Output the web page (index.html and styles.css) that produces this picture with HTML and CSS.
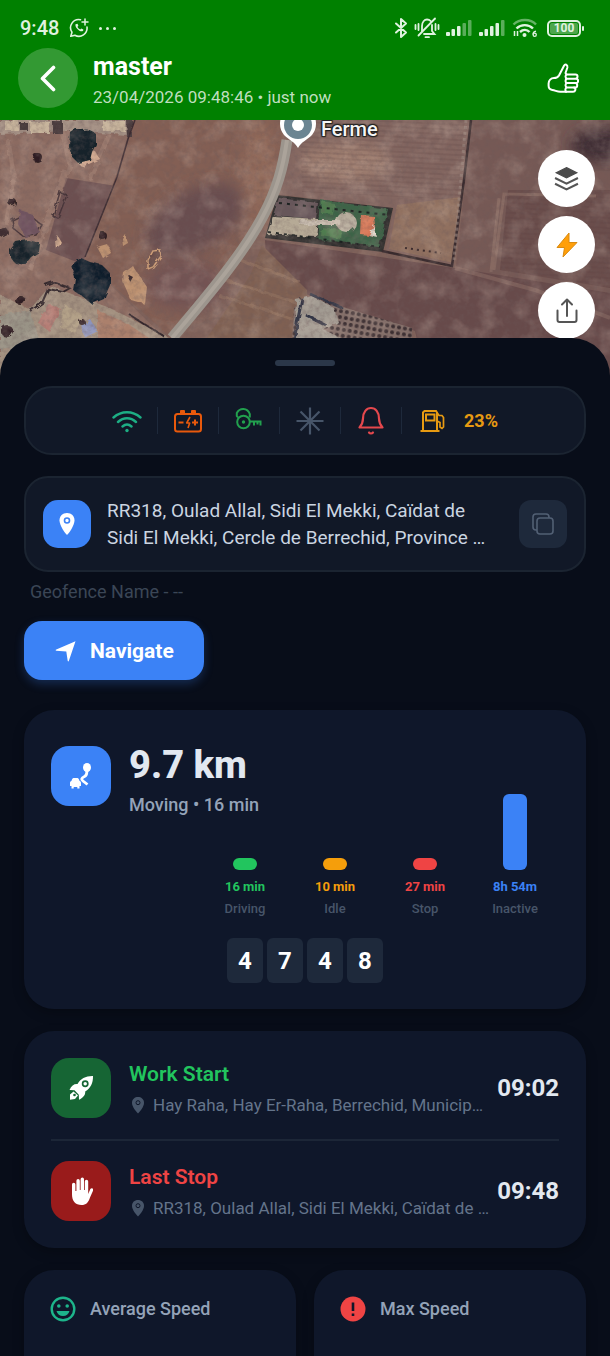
FILE: index.html
```html
<!DOCTYPE html>
<html lang="en">
<head>
<meta charset="utf-8">
<meta name="viewport" content="width=device-width, initial-scale=1">
<title>master</title>
<link rel="stylesheet" href="styles.css">
</head>
<body>
<div class="app">
  <header class="topbar">
    <div class="statusbar">
      <span class="clock">9:48</span>
      <svg class="sb-whatsapp" width="20" height="20" viewBox="0 0 20 20" fill="none" stroke="currentColor" stroke-width="1.6" stroke-linecap="round" stroke-linejoin="round">
        <path d="M11.500 1.700A8.200 8.200 0 0 0 3 14.300L1.800 18.300l4.100-1.100A8.200 8.200 0 0 0 18 9"/>
        <path d="M16 1v6M13 4h6" stroke-width="1.500"/>
        <path d="M6.500 6.200c-.8 2.800 3.400 7.400 6.700 7.100 1-.3 1.300-1 1.100-1.800l-2-1-1 1c-1.200-.4-2.400-1.600-2.800-2.800l.9-1-.9-2z" fill="currentColor" stroke="none"/>
      </svg>
      <span class="dots"><i></i><i></i><i></i></span>
      <div class="sb-right">
        <svg width="14" height="22" viewBox="0 0 14 22" fill="none" stroke="currentColor" stroke-width="2" stroke-linejoin="round" stroke-linecap="round"><path d="M2 6.500 12 15.500 7 20V2l5 4.500L2 15.500"/></svg>
        <svg width="26" height="22" viewBox="0 0 26 22" fill="none" stroke="currentColor" stroke-width="1.800" stroke-linecap="round">
          <path d="M8 14V9c0-4 2.500-6.500 5-6.500 1.500 0 2.700.5 3.600 1.500M18 8v6l2.500 3H10"/><path d="M21 1.500 4.500 18.500"/><path d="M11.500 20.200h3.500M1.500 8v4M4.500 7v6M21.500 7v6M24.500 8v4"/>
        </svg>
        <svg width="27" height="18" viewBox="0 0 27 18" fill="currentColor"><rect x="0" y="13" width="4" height="4" rx="1"/><rect x="5.500" y="10" width="3.500" height="7" rx="1"/><rect x="11" y="7" width="3.500" height="10" rx="1"/><g opacity=".4"><rect x="16.500" y="4" width="3.500" height="13" rx="1"/><rect x="22" y="1" width="3.500" height="16" rx="1"/></g></svg>
        <svg width="27" height="18" viewBox="0 0 27 18" fill="currentColor"><rect x="0" y="13" width="4" height="4" rx="1"/><rect x="5.500" y="10" width="3.500" height="7" rx="1"/><rect x="11" y="7" width="3.500" height="10" rx="1"/><rect x="16.500" y="4" width="3.500" height="13" rx="1"/><rect x="22" y="1" width="3.500" height="16" rx="1" opacity=".4"/></svg>
        <svg width="26" height="20" viewBox="0 0 26 20" fill="none" stroke="currentColor" stroke-width="2.400">
          <path d="M1.500 6.500c6-6 17-6 22.500 0" opacity=".45"/><path d="M4.500 10.500c4.500-4.500 12-4.500 16.500 0"/><path d="M8 14c3-2.800 7-2.800 9.500 0" /><circle cx="12.500" cy="17" r="2" fill="currentColor" stroke="none"/>
          <path d="M2.500 13v5M5.500 13v5" stroke-width="1.500"/><path d="M24 13.200c-2.500.5-3 2-3 3.300" stroke-width="1.300"/><circle cx="22.700" cy="16.700" r="1.600" stroke-width="1.300"/>
        </svg>
        <span class="battery"><b>100</b></span>
      </div>
    </div>
    <div class="titlebar">
      <button class="back" type="button" aria-label="Back">
        <svg width="16" height="27" viewBox="0 0 16 27" fill="none" stroke="currentColor" stroke-width="3.600" stroke-linecap="round" stroke-linejoin="round"><path d="M13.500 2.500 2.500 13.500l11 11"/></svg>
      </button>
      <div class="titles">
        <h1>master</h1>
        <p>23/04/2026 09:48:46 • just now</p>
      </div>
      <button class="like" type="button" aria-label="Like">
        <svg width="32" height="32" viewBox="0 0 32 32" fill="none" stroke="currentColor" stroke-width="2" stroke-linejoin="round" stroke-linecap="round">
          <path d="M19.500 12.500 18.500 11l1.900-5.500c.4-3-2.300-3.800-3.400-1.700L12 13.500c-1 1.800-2.600 2.600-5 2.600-3.200 0-5.400 2.200-5.400 5.400v2.300c0 2.400 1.300 3.800 3.700 4.200 3.400.6 4.700 1.800 8 1.800H26c2.600 0 3.300-3.400 1-4.300"/>
          <path d="M20 12.500h8.500c2.700 0 2.700 4.200 0 4.200H20M20 16.700h9c2.800 0 2.800 4.400 0 4.400h-9M20 21.100h8.200c2.700 0 2.700 4.400 0 4.400H20M20 12.500c-2 .5-2 3.700 0 4.200-2 .5-2 3.900 0 4.400-2 .5-2 3.900 0 4.400-1.800.4-2 2.600-1 4.300"/>
        </svg>
      </button>
    </div>
  </header>

  <section class="map" aria-label="Map">
    <svg class="terrain" viewBox="0 0 610 256" preserveAspectRatio="xMidYMin slice">
      <defs>
        <filter id="grain" x="0" y="0" width="100%" height="100%"><feTurbulence type="fractalNoise" baseFrequency=".2" numOctaves="3" seed="7"/><feColorMatrix values="0 0 0 0 .15  0 0 0 0 .1  0 0 0 0 .1  1.500 0 0 0 -.6"/></filter>
        <filter id="light" x="0" y="0" width="100%" height="100%"><feTurbulence type="fractalNoise" baseFrequency=".05" numOctaves="4" seed="3"/><feColorMatrix values="0 0 0 0 .8  0 0 0 0 .66  0 0 0 0 .56  0 1.500 0 0 -.65"/></filter>
        <filter id="rough" x="-20%" y="-20%" width="140%" height="140%"><feTurbulence type="fractalNoise" baseFrequency=".15" numOctaves="2" seed="5"/><feDisplacementMap in="SourceGraphic" scale="5"/><feGaussianBlur stdDeviation=".6"/></filter>
        <filter id="soft" x="-20%" y="-20%" width="140%" height="140%"><feGaussianBlur stdDeviation="7"/></filter>
        <pattern id="furrow" width="5" height="5" patternUnits="userSpaceOnUse" patternTransform="rotate(3)"><path d="M0 1h5" stroke="#4f3838" stroke-width="1" opacity=".3"/></pattern>
        <pattern id="orchard" width="6" height="6" patternUnits="userSpaceOnUse" patternTransform="rotate(10)"><rect width="6" height="6" fill="#85706a"/><circle cx="3" cy="3" r="2" fill="#3a2e31"/></pattern>
      </defs>
      <rect width="610" height="256" fill="#80625a"/>
      <path d="M0 0h132l-14 50-33 90 80 78v38H0z" fill="#8c6b61"/>
      <path d="M66 58l50 8-34 78-36-14z" fill="#6c4f50"/>
      <path d="M133 0h154l-18 75-25 50-74 92-85-77 33-90z" fill="#835f54"/>
      <g filter="url(#soft)">
        <ellipse cx="195" cy="100" rx="55" ry="30" fill="#694d4f" transform="rotate(-28 195 100)"/>
        <ellipse cx="185" cy="165" rx="40" ry="25" fill="#735252"/>
        <ellipse cx="260" cy="55" rx="18" ry="55" fill="#8f6858"/>
      </g>
      <path d="M300 0h170l-16 145-68-15 8-42-118-14z" fill="#836660"/>
      <ellipse cx="345" cy="42" rx="45" ry="20" fill="#9f7e6f" filter="url(#soft)"/>
      <path d="M397 85l64-8-7 66-65-14z" fill="#90705f"/>
      <path d="M472 0h138v256H460l-4-110z" fill="#765955"/>
      <path d="M508 70h102v98l-110-18z" fill="#6a4d4b"/>
      <path d="M508 70h102v98l-110-18z" fill="url(#furrow)"/>
      <ellipse cx="605" cy="25" rx="35" ry="18" fill="#412d34" filter="url(#soft)"/>
      <path d="M494 150l10-76 92 2M499 78l-8 74" fill="none" stroke="#97796d" stroke-width="3" opacity=".5"/>
      <path d="M265 120l190 28 155 25v83H425l-10-45-110-37-38-12z" fill="#674a4a"/>
      <path d="M262 125l45 45 5 86H180l70-100z" fill="#7f6052"/>
      <g filter="url(#rough)" stroke="#a07e68" stroke-width="3" opacity=".45"><path d="M240 140l60 22M225 160l80 25M218 175l75 24"/></g>
      <path d="M300 0h170l-8 80-160-8z" fill="url(#furrow)"/>
      <path d="M455 148l80 22 75 28" fill="none" stroke="#927267" stroke-width="4" opacity=".5"/>
      <g fill="none" stroke="#a88779" stroke-width="5" opacity=".5" filter="url(#rough)"><path d="M8 20l6 40-8 45M65 50L45 105M60 0L70 45 45 110 30 150M115 0L90 60"/></g>
      <g filter="url(#rough)">
        <path d="M0 0h132l-5 15-60-4-67 3z" fill="#a59185"/>
        <path d="M5 1h14v10H5zM30 2h20v11H30zM103 1h22v10h-22z" fill="#c7b49c"/>
        <path d="M20 3h8v8h-8zM53 1h10v13H53zM126 0h6v17h-5z" fill="#4a3a3c"/>
        <path d="M0 175l30 14 20-23 60 22 60 30v38H0z" fill="#a2907f"/>
        <path d="M0 195l30-5 10 35-40 5z" fill="#999386"/><path d="M48 184l13 5-12 22-11-8z" fill="#b27a72"/><path d="M65 185l18 10-8 18-15-6z" fill="#b3a188"/><path d="M98 190l30 14 30 20-60-6z" fill="#ab806c"/>
        <path d="M82 204l8-5 8 12-14 7z" fill="#8991bd"/>
        <path d="M45 165l8-3 17 6-7 4-15-3-6 14-12 8M130 195l35 22" fill="none" stroke="#32272c" stroke-width="2"/>
        <path d="M60 72l7 3-9 23-5-2zM12 100l10-5 12 4 8 6-6 10-12 2-10-8z" fill="none" stroke="#473439" stroke-width="1.500"/>
        <path d="M20 90l12 4 8 18-14 6-8-14z" fill="#6f5360"/><path d="M55 120l3-4 4 7-6 6z" fill="#d0a98c"/>
        <path d="M70 35l12 12 18-8-5-8-20-5z" fill="#d2aa91"/>
        <path d="M70 12q5-5 12-2 8-2 14 4v10l-4 8-2 8-12 3-6-6-3-10z" fill="#14242a"/><path d="M10 130l6-8 12-2 12 3-1 9-8 5-6 8-10-2-5-6z" fill="#14242a"/><path d="M71 145l10-7 9 4 12 3 8 8v12l-6 14-12 5-10-8-9-6 2-12z" fill="#101f2b"/>
        <g fill="#2e1e20"><circle cx="38" cy="38" r="5"/><circle cx="12" cy="82" r="4"/><circle cx="3" cy="112" r="5"/><circle cx="103" cy="116" r="4"/><circle cx="20" cy="180" r="5"/><circle cx="7" cy="211" r="6"/><circle cx="82" cy="202" r="3"/></g>
        <path d="M97 127l10-3 4 9-8 5zM122 118l3-4 3 9-5 3zM124 153l9-7 14 21-2 17-14-4-8-18z" fill="#bd9271"/>
        <path d="M127 154l6 3-3 5z" fill="#3b2b2e"/>
        <path d="M148 140l5-9 7-1 1 6-8 11-5 2z" fill="#6b4e48" stroke="#d0a078" stroke-width="1.500"/>
      </g>
      <path d="M135 0l-7 19-11 38-32 80" fill="none" stroke="#3b2a30" stroke-width="1.500"/>
      <path d="M277 75l116 13-10 44-118-14z" fill="#302f2e"/>
      <g filter="url(#rough)">
        <path d="M279 78l39 5-2 16-43-4z" fill="#66565a"/><path d="M273 96l45 3-2 18-49-3z" fill="#b6aa96"/>
        <path d="M320 80l68 9-9 38-62-8z" fill="#3e6347"/><path d="M321 82l14 2-2 10-12-1zM322 107l20 3-1 9-20-3z" fill="#4f7c50"/>
        <circle cx="346" cy="102" r="10" fill="#b8ae9e"/><path d="M300 100h40v5h-40z" fill="#c9beb0"/><path d="M361 95l13 1 2 20-16-2z" fill="#d87959"/><path d="M374 105l3 12-8-2z" fill="#e4d9cc"/>
      </g>
      <path d="M279 83l110 12M268 112l112 15" stroke="#1b2120" stroke-width="2" stroke-dasharray="3 5"/>
      <path d="M471 0l-7 60-12 86-70-15" fill="none" stroke="#382a2d" stroke-width="2.500"/>
      <path d="M466 0l-12 140" fill="none" stroke="#9c8881" stroke-width="3" stroke-dasharray="3 3" opacity=".6"/>
      <path d="M405 128l36 5" stroke="#39292a" stroke-width="2" stroke-dasharray="2 4"/>
      <path d="M306 176l106 32v48H290l4-68z" fill="url(#orchard)"/>
      <path d="M296 180l16-4 22 12 4 14-14 8 30 14v30h-60z" fill="#a29b92" filter="url(#rough)"/>
      <path d="M302 178l-8 42M306 195l20 10M310 174l32 14" stroke="#303444" stroke-width="3" filter="url(#rough)"/>
      <rect width="610" height="256" filter="url(#light)" opacity=".35"/>
      <rect width="610" height="256" filter="url(#grain)" opacity=".5"/>
      <path d="M287 20c-4 28-10 50-24 76-18 35-52 76-91 122" fill="none" stroke="#9c958d" stroke-width="11"/>
      <path d="M287 20c-4 28-10 50-24 76-18 35-52 76-91 122" fill="none" stroke="#aba39a" stroke-width="4"/>
      <path d="M298 28c-3-6-9-8-14-13a18 18 0 1 1 28 0c-5 5-11 7-14 13z" fill="#fff"/>
      <circle cx="298" cy="5" r="14" fill="#6b8592"/><circle cx="298" cy="5" r="6" fill="#fff"/>
    </svg>
    <span class="place">Ferme</span>
    <div class="fabs">
      <button type="button" aria-label="Map layers"><svg width="25" height="25" viewBox="0 0 24 24" fill="none" stroke="#555" stroke-width="2"><path d="M12 1.500 22 6.500l-10 5-10-5z" fill="#4b4b4b" stroke="#4b4b4b" stroke-width="1"/><path d="m1 11.500 11 5.500 11-5.500M1 17l11 5.500L23 17"/></svg></button>
      <button type="button" aria-label="Traffic"><svg width="24" height="26" viewBox="0 0 24 26"><path d="M14 1 2 15.500h7.500L8 25l14-14.500h-8z" fill="#ff9f0a" stroke="#d98a10" stroke-width="1" stroke-linejoin="round"/></svg></button>
      <button type="button" aria-label="Share"><svg width="24" height="26" viewBox="0 0 24 26" fill="none" stroke="#555" stroke-width="2" stroke-linecap="round" stroke-linejoin="round"><path d="M12 18V2M7 6.500 12 1.500l5 5M2.500 12.500V22c0 1.500.7 2 2 2h15c1.300 0 2-.5 2-2v-9.500"/></svg></button>
    </div>
  </section>

  <main class="sheet">
    <div class="handle"></div>

    <section class="sensors">
      <svg width="30" height="30" viewBox="0 0 30 30" fill="none" stroke="#1dae84" stroke-width="2.400" stroke-linecap="round"><path d="M1.500 11.500c8-7 19-7 27 0M6 16c5.500-5 12.500-5 18 0M10.500 20.500c3-2.600 6-2.600 9 0"/><circle cx="15" cy="24.500" r="1.700" fill="#1dae84" stroke="none"/></svg>
      <i></i>
      <svg width="30" height="30" viewBox="0 0 30 30" fill="none" stroke="#e8590c" stroke-width="2" stroke-linejoin="round"><rect x="2" y="8" width="26" height="17.500" rx="2.500"/><path d="M8 8V5h3v3M19 8V5h3v3" fill="#e8590c"/><path d="M5.500 16.500h5M19 16.500h6M22 13.500v6" /><path d="m17 11-3.300 6h3L15 22" stroke-width="1.600"/></svg>
      <i></i>
      <svg width="30" height="30" viewBox="0 0 30 30" fill="none" stroke="#22a04e" stroke-width="2"><circle cx="9.500" cy="16" r="6.300"/><circle cx="9.500" cy="16" r="1.700" fill="#22a04e" stroke="none"/><path d="M16 15.500h10.500v4M23.500 15.500v3M20 15.500v4M4 11.500 2.800 10V7c3-5.500 10.500-5.500 13 1v3.500"/></svg>
      <i></i>
      <svg width="30" height="30" viewBox="0 0 30 30" fill="none" stroke="#475569" stroke-width="2.200"><path d="M15 1.500v27M1.500 15h27M5.500 5.500l19 19M24.500 5.500l-19 19"/></svg>
      <i></i>
      <svg width="30" height="30" viewBox="0 0 30 30" fill="none" stroke="#e5484d" stroke-width="2.200" stroke-linecap="round" stroke-linejoin="round"><path d="M3.500 21.500h23c-2.500-3-3.500-5-3.500-9C23 6 19.500 2 15 2s-8 4-8 10.500c0 4-1 6-3.500 9zM13 26.500c1 1.300 3 1.300 4 0"/></svg>
      <i></i>
      <svg width="30" height="30" viewBox="0 0 30 30" fill="none" stroke="#e79a12" stroke-width="2"><path d="M6 25V6.500L7.500 5H19l1 1.500V25M3.500 25h19" /><rect x="9" y="8.500" width="8.500" height="6"/><path d="M20 6.500l2 3h3l1.500 2v9.500l-1.500 1.500-2-1.500v-4.500L20 15" stroke-width="1.700"/></svg>
      <span class="fuel">23%</span>
    </section>

    <section class="address">
      <span class="tile tile-sm blue"><svg width="18" height="22" viewBox="0 0 18 22"><path d="M9 0C4.500 0 1.500 3.200 1.500 7.200 1.500 12.500 7 20 9 22c2-2 7.500-9.500 7.500-14.800C16.500 3.200 13.500 0 9 0z" fill="#fff"/><circle cx="9" cy="7.500" r="2.500" fill="#fff" stroke="#3b82f6" stroke-width="1.600"/></svg></span>
      <p>RR318, Oulad Allal, Sidi El Mekki, Caïdat de Sidi El Mekki, Cercle de Berrechid, Province …</p>
      <button class="copy" type="button" aria-label="Copy address"><svg width="22" height="22" viewBox="0 0 22 22" fill="none" stroke="#526074" stroke-width="1.600"><rect x="5" y="5" width="16" height="16" rx="3"/><path d="M5 17H4a3 3 0 0 1-3-3V4a3 3 0 0 1 3-3h10a3 3 0 0 1 3 3v1"/></svg></button>
    </section>

    <p class="geofence">Geofence Name - --</p>

    <button class="navigate" type="button"><svg width="22" height="22" viewBox="0 0 22 22"><path d="M20.500 1.200 1.300 9.500c-.9.500-.8 1 0 1.200l10 .8 1.400 9.300c.2.900.8.900 1.200 0z" fill="#fff"/></svg>Navigate</button>

    <section class="card trip">
      <div class="row-top">
        <span class="tile blue"><svg width="26" height="28" viewBox="0 0 26 28"><path d="M19 8c-.5 3.500.5 5-2.500 6.500s-3.800 3-1.500 4.500l4.500 3.500" fill="none" stroke="#fff" stroke-width="2.800" stroke-linejoin="round"/><ellipse cx="19" cy="5.500" rx="4" ry="4.600" fill="#fff"/><path d="M4 17.500c.5-1.200 1.200-1.600 2.300-1.600h2.400c1.100 0 1.800.4 2.300 1.600l.6 1.500c1 .4 1.400 1 1.400 2v3h-1.500v2.500H9.300V25H5.700v1.500H3.500V24H2v-3c0-1 .4-1.600 1.400-2z" fill="#fff"/></svg></span>
        <div class="distance"><h2>9.7 km</h2><p>Moving • 16 min</p></div>
      </div>
      <div class="bars">
        <div class="bar green"><i></i><b>16 min</b><span>Driving</span></div>
        <div class="bar amber"><i></i><b>10 min</b><span>Idle</span></div>
        <div class="bar red"><i></i><b>27 min</b><span>Stop</span></div>
        <div class="bar azure"><i style="height:76px"></i><b>8h 54m</b><span>Inactive</span></div>
      </div>
      <div class="odometer"><span>4</span><span>7</span><span>4</span><span>8</span></div>
    </section>

    <section class="card events">
      <article class="event">
        <span class="tile forest"><svg width="28" height="28" viewBox="0 0 28 28"><path d="M26 2c-7-.2-12.500 2.500-15.500 8-3.500-.3-6 1.500-8 6l5 .3 4.300 4.400.2 5c4.500-2 6.500-4.800 6.200-8.200C23.500 14.500 26.200 9 26 2z" fill="#fff"/><circle cx="18.200" cy="9.800" r="2.600" fill="#fff" stroke="#166534" stroke-width="1.700"/><path d="M6.500 17.500 3 20.500v5.300l5-.8 3-3.500z" fill="#fff"/><circle cx="7.500" cy="21" r="1.300" fill="#166534"/></svg></span>
        <div class="event-text"><h3 class="t-green">Work Start</h3><p><svg width="14" height="18" viewBox="0 0 14 18"><path d="M7 1C3.500 1 1 3.400 1 6.700 1 11 5.500 16 7 17.500 8.500 16 13 11 13 6.700 13 3.400 10.500 1 7 1z" fill="#475569"/><circle cx="7" cy="6.700" r="2" fill="none" stroke="#0f172a"/></svg>Hay Raha, Hay Er-Raha, Berrechid, Municip…</p></div>
        <time>09:02</time>
      </article>
      <hr>
      <article class="event">
        <span class="tile maroon"><svg width="24" height="28" viewBox="0 0 24 28"><path d="M3 17.500V7.500a1.700 1.700 0 0 1 3.400 0V14h1V3.800a1.700 1.700 0 0 1 3.400 0V13h.8V2.200a1.700 1.700 0 0 1 3.400 0V13h.8V4.500a1.700 1.700 0 0 1 3.400 0V17l2-4.800c.8-1.800 3.600-1.200 3 1L21 20.500C19.500 25.500 17 28 12.500 28 6.500 28 3 24 3 17.500z" fill="#fff"/></svg></span>
        <div class="event-text"><h3 class="t-red">Last Stop</h3><p><svg width="14" height="18" viewBox="0 0 14 18"><path d="M7 1C3.500 1 1 3.400 1 6.700 1 11 5.500 16 7 17.500 8.500 16 13 11 13 6.700 13 3.400 10.500 1 7 1z" fill="#475569"/><circle cx="7" cy="6.700" r="2" fill="none" stroke="#0f172a"/></svg>RR318, Oulad Allal, Sidi El Mekki, Caïdat de …</p></div>
        <time>09:48</time>
      </article>
    </section>

    <div class="speeds">
      <section class="card speed"><svg width="26" height="26" viewBox="0 0 26 26"><circle cx="13" cy="13" r="11.300" fill="none" stroke="#1db58b" stroke-width="2.400"/><circle cx="8.800" cy="10" r="1.800" fill="#1db58b"/><circle cx="17.200" cy="10" r="1.800" fill="#1db58b"/><path d="M6.500 15h13c-.8 3-3.300 5-6.500 5s-5.700-2-6.500-5z" fill="#1db58b"/></svg>Average Speed</section>
      <section class="card speed"><svg width="26" height="26" viewBox="0 0 26 26"><circle cx="13" cy="13" r="12.500" fill="#ef4444"/><path d="M13 6.500v8.500M13 17.500v2.500" stroke="#0f172a" stroke-width="2.600"/></svg>Max Speed</section>
    </div>
  </main>
</div>
</body>
</html>
```
FILE: styles.css
```css
* { box-sizing: border-box; }
body { margin: 0; background: #080d19; color: #e2e8f0; font-family: Roboto, "Liberation Sans", sans-serif; }
h1, h2, h3, p { margin: 0; }
button { border: 0; padding: 0; font: inherit; color: inherit; cursor: pointer; }
svg { display: block; flex: none; }
.app { display: flex; flex-direction: column; height: 100vh; overflow: hidden; }

.topbar { flex: none; background: #008000; color: #fff; padding: 16px 18px 12px; }
.statusbar { display: flex; align-items: center; height: 24px; padding: 0 8px 0 2px; color: #e0f2e0; }
.clock { font-size: 20px; font-weight: 500; line-height: 24px; }
.sb-whatsapp { margin-left: 10px; }
.dots { display: flex; gap: 4px; margin-left: 10px; }
.dots i { width: 3px; height: 3px; border-radius: 50%; background: currentColor; }
.sb-right { display: flex; align-items: center; gap: 6px; margin-left: auto; }
.battery { position: relative; display: flex; align-items: center; justify-content: center; width: 34px; height: 17px; margin: 0 3px; padding: 1px; border: 2px solid currentColor; border-radius: 5px; }
.battery::after { content: ""; position: absolute; right: -5px; top: 4px; width: 2px; height: 5px; border-radius: 1px; background: currentColor; }
.battery b { width: 100%; border-radius: 2px; background: #4da64d; font-size: 12px; line-height: 11px; text-align: center; }
.titlebar { display: flex; align-items: center; height: 60px; margin-top: 8px; }
.back { display: grid; place-items: center; width: 60px; height: 60px; border-radius: 50%; background: #339933; }
.titles { flex: 1; margin-left: 15px; padding-top: 5px; }
.titles h1 { font-size: 25px; font-weight: 700; line-height: 30px; }
.titles p { margin-top: 3px; font-size: 17px; line-height: 24px; color: #bfdfbf; }
.like { margin-right: 13px; background: none; }

.map { position: relative; flex: none; height: 256px; overflow: hidden; background: #7c5f58; }
.terrain { width: 100%; height: 100%; }
.place { position: absolute; top: 0; left: calc(50% + 16px); font-size: 20px; font-weight: 500; line-height: 18px; color: #f5f5f5; text-shadow: 0 0 2px #222, 1px 1px 1px #222, -1px -1px 1px #222, 1px -1px 1px #222, -1px 1px 1px #222; }
.fabs { position: absolute; top: 30px; right: 15px; display: grid; gap: 9px; }
.fabs button { display: grid; place-items: center; width: 57px; height: 57px; border-radius: 50%; background: #fff; }

.sheet { position: relative; flex: 1; min-height: 0; margin-top: -38px; padding: 22px 24px 0; border-radius: 38px 38px 0 0; background: #080d19; overflow-y: auto; scrollbar-width: none; }
.handle { width: 60px; height: 6px; margin: 0 auto 20px; border-radius: 3px; background: #2b3749; }
.sensors { display: flex; align-items: center; justify-content: center; gap: 15px; height: 69px; border: 2px solid #1b2431; border-radius: 28px; background: #111827; }
.sensors i { width: 1px; height: 27px; background: #1e293b; }
.fuel { margin-left: 2px; font-size: 18px; font-weight: 700; color: #e79a12; }
.address { display: flex; align-items: center; gap: 16px; margin-top: 21px; padding: 17px; border: 2px solid #1b2431; border-radius: 24px; background: #111827; }
.address p { flex: 1; padding: 2px 8px 2px 0; font-size: 19px; line-height: 27px; color: #cbd5e1; }
.tile { flex: none; display: grid; place-items: center; width: 60px; height: 60px; border-radius: 18px; }
.tile-sm { width: 48px; height: 48px; border-radius: 15px; }
.blue { background: #3b82f6; }
.forest { background: #166534; }
.maroon { background: #991b1b; }
.copy { display: grid; place-items: center; width: 48px; height: 48px; border-radius: 12px; background: #1e293b; }
.geofence { margin: 7px 6px 16px; font-size: 18px; line-height: 26px; color: #3b4656; }
.navigate { display: flex; align-items: center; gap: 13px; height: 59px; padding: 0 30px 0 31px; border-radius: 18px; background: #3b82f6; color: #fff; font-size: 21px; font-weight: 700; box-shadow: 0 4px 10px #3b82f640; }

.card { border-radius: 30px; background: #0f172a; box-shadow: 0 4px 12px #00000040; }
.trip { margin-top: 30px; padding: 33px 26px 26px; }
.row-top { display: flex; align-items: flex-start; gap: 18px; padding-left: 1px; }
.row-top .tile { margin-top: 3px; }
.distance h2 { font-size: 38px; font-weight: 800; line-height: 44px; }
.distance p { margin-top: 6px; font-size: 18px; font-weight: 500; line-height: 24px; color: #94a3b8; }
.bars { display: grid; grid-template-columns: repeat(4, 90px); justify-content: end; align-items: end; margin-top: -23px; }
.bar { display: grid; justify-items: center; font-size: 13px; line-height: 18px; }
.bar i { width: 24px; height: 12px; border-radius: 6px; background: currentColor; }
.bar b { margin-top: 8px; font-weight: 700; }
.bar span { margin-top: 4px; font-weight: 500; color: #475569; }
.green { color: #22c55e; }
.amber { color: #f59e0b; }
.red { color: #ef4444; }
.azure { color: #3b82f6; }
.odometer { display: flex; justify-content: center; gap: 4px; margin-top: 20px; }
.odometer span { display: grid; place-items: center; width: 36px; height: 45px; border-radius: 6px; background: #1e293b; color: #fff; font-size: 24px; font-weight: 700; }

.events { margin-top: 22px; padding: 27px; }
.event { display: flex; align-items: center; gap: 18px; }
.event-text { flex: 1; min-width: 0; }
.event h3 { font-size: 21px; font-weight: 600; line-height: 30px; }
.event p { display: flex; align-items: center; gap: 8px; padding-left: 2px; margin-top: 4px; font-size: 17px; line-height: 24px; color: #64748b; white-space: nowrap; }
.t-green { color: #22c55e; }
.t-red { color: #ef4444; }
.event time { font-size: 24px; font-weight: 700; margin-left: -12px; }
.events hr { height: 2px; margin: 21px 0 20px; border: 0; background: #1c2637; }
.speeds { display: grid; grid-template-columns: 1fr 1fr; gap: 18px; margin-top: 22px; padding-bottom: 24px; }
.speed { display: flex; align-items: flex-start; gap: 14px; min-height: 150px; padding: 26px; font-size: 18px; font-weight: 500; line-height: 26px; color: #94a3b8; }
```
